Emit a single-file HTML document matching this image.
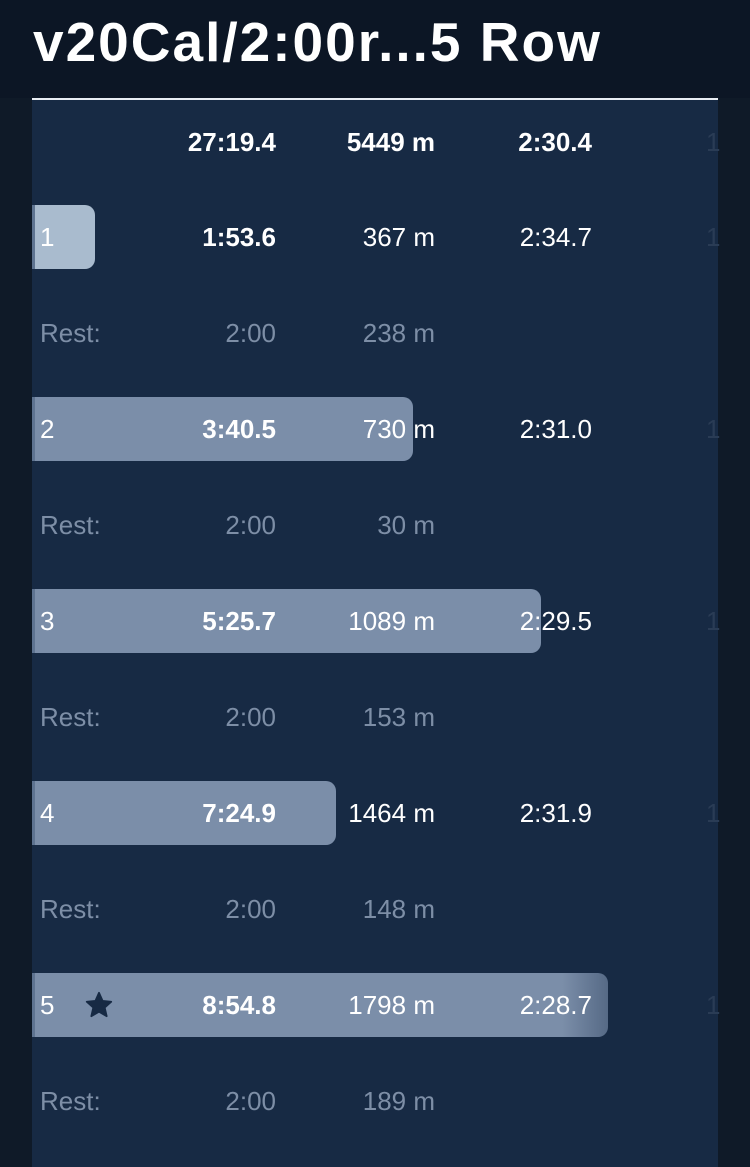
<!DOCTYPE html>
<html><head><meta charset="utf-8"><style>
*{margin:0;padding:0;box-sizing:border-box}
body{width:750px;height:1167px;background:#0f1a28;font-family:"Liberation Sans Narrow","Liberation Sans",sans-serif;overflow:hidden;position:relative;color:#fff}
.hdr{position:absolute;left:0;top:0;width:750px;height:98px;background:#0c1625}
.title{position:absolute;left:33px;top:10px;font-family:"Liberation Sans",sans-serif;font-weight:bold;font-size:55px;line-height:64px;letter-spacing:2px;color:#fff;white-space:nowrap}
.line{position:absolute;left:32px;top:98px;width:686px;height:2px;background:#e8edf3}
.panel{position:absolute;left:32px;top:100px;width:686px;height:1067px;background:#172a44}
.bar{position:absolute;left:32px;height:64px;background:#7b8ea9;border-radius:0 10px 10px 0;border-left:3px solid #5e7390}
.t{position:absolute;font-size:26px;line-height:30px;transform:translateY(-15px)}
.r{text-align:right}
.b{font-weight:bold}
.g{color:#7d8ea6}
.f{color:#2a3c55}
</style></head><body>
<div class="hdr"></div>
<div class="title">v20Cal/2:00r...5 Row</div>
<div class="panel"></div>
<div class="line"></div>

<div class="bar" style="top:205px;width:63px;background:#a9bbce"></div>
<div class="bar" style="top:397px;width:381px"></div>
<div class="bar" style="top:589px;width:509px"></div>
<div class="bar" style="top:781px;width:304px"></div>
<div class="bar" style="top:973px;width:576px;background:linear-gradient(90deg,#7b8ea9 92%,#566a86)"></div>

<div id="rows"></div>
<script>
const rows=[
[142,'','27:19.4','5449 m','2:30.4',true,false],
[237,'1','1:53.6','367 m','2:34.7',false,false],
[333,'Rest:','2:00','238 m','',false,true],
[429,'2','3:40.5','730 m','2:31.0',false,false],
[525,'Rest:','2:00','30 m','',false,true],
[621,'3','5:25.7','1089 m','2:29.5',false,false],
[717,'Rest:','2:00','153 m','',false,true],
[813,'4','7:24.9','1464 m','2:31.9',false,false],
[909,'Rest:','2:00','148 m','',false,true],
[1005,'5','8:54.8','1798 m','2:28.7',false,false],
[1101,'Rest:','2:00','189 m','',false,true]];
let h='';
for(const [y,l,a,b,c,hd,rest] of rows){
 const g=rest?' g':'';
 h+=`<div class="t${g}" style="left:40px;top:${y}px">${l}</div>`;
 h+=`<div class="t r${g}${rest?'':' b'}" style="left:140px;width:136px;top:${y}px">${a}</div>`;
 h+=`<div class="t r${g}${hd?' b':''}" style="left:300px;width:135px;top:${y}px">${b}</div>`;
 h+=`<div class="t r${hd?' b':''}" style="left:450px;width:142px;top:${y}px">${c}</div>`;
 if(!rest) h+=`<div class="t f" style="left:706px;top:${y}px">1</div>`;
}
document.getElementById('rows').innerHTML=h;
</script>
<svg style="position:absolute;left:85px;top:991px" width="28" height="28" viewBox="0 0 24 24"><path d="M12 1.5l3.1 7 7.4.7-5.6 5 1.7 7.4L12 17.8l-6.6 3.8 1.7-7.4-5.6-5 7.4-.7z" fill="#172a44" stroke="#172a44" stroke-linejoin="round" stroke-width="1.5"/></svg>
</body></html>
